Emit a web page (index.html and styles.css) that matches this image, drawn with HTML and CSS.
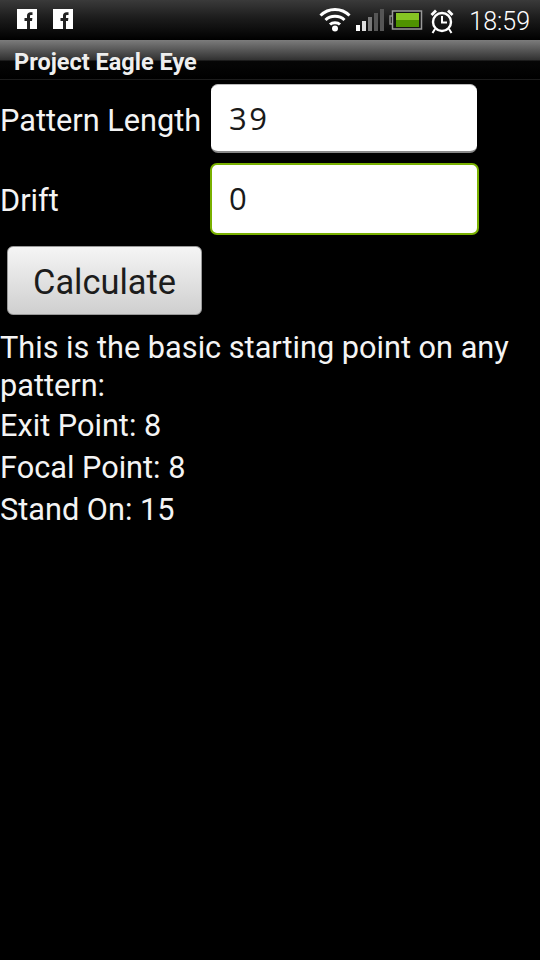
FILE: index.html
```html
<!DOCTYPE html>
<html lang="en">

<head>
    <meta charset="UTF-8">
    <title>Project Eagle Eye</title>
    <link rel="stylesheet" href="styles.css">
</head>

<body>
    <div class="statusbar">
        <div class="notify">
            <svg class="fb" viewBox="0 0 20 20"><rect width="20" height="20" fill="#fff"/><path d="M10 20V12H7.5V9H10V6.8C10 4.4 11.4 3.2 13.6 3.2H15.5V6H14.2C13.2 6 13 6.5 13 7.2V9H15.4L15 12H13V20Z" fill="#222"/></svg>
            <svg class="fb" viewBox="0 0 20 20"><rect width="20" height="20" fill="#fff"/><path d="M10 20V12H7.5V9H10V6.8C10 4.4 11.4 3.2 13.6 3.2H15.5V6H14.2C13.2 6 13 6.5 13 7.2V9H15.4L15 12H13V20Z" fill="#222"/></svg>
        </div>
        <div class="status">
            <svg class="wifi" width="32" height="26" viewBox="0 0 32 26" fill="none" stroke="#fff" stroke-width="3">
                <path d="M1.5 9.5C9.5 1.5 22.5 1.5 30.5 9.5"/>
                <path d="M6.5 14C11.5 9 20.5 9 25.5 14"/>
                <path d="M11 18.5C13.5 16 18.5 16 21 18.5"/>
                <circle cx="16" cy="22.5" r="3" fill="#fff" stroke="none"/>
            </svg>
            <svg class="signal" width="29" height="24" viewBox="0 0 29 24">
                <rect x="0" y="17" width="4" height="6" fill="#fff"/>
                <rect x="6" y="13" width="4" height="10" fill="#ddd"/>
                <rect x="12" y="9" width="4" height="14" fill="#777"/>
                <rect x="18" y="5" width="4" height="18" fill="#555"/>
                <rect x="24" y="1" width="4" height="22" fill="#555"/>
            </svg>
            <svg class="battery" width="35" height="20" viewBox="0 0 35 20">
                <path d="M4 6H2V14H4" fill="#111" stroke="#888" stroke-width="1.5"/>
                <rect x="4.5" y="1" width="29" height="18" fill="#111" stroke="#999" stroke-width="1.5"/>
                <rect x="8" y="3" width="23" height="14" fill="#4f9200"/>
                <rect x="8" y="3" width="23" height="7" fill="#86c423"/>
            </svg>
            <svg class="alarm" width="26" height="26" viewBox="0 0 26 26" fill="none" stroke="#fff">
                <circle cx="13" cy="14" r="9" stroke-width="2.4"/>
                <path d="M13 8V14.5H18" stroke-width="2"/>
                <path d="M1.5 6L6 1.5L8 3.5L3.5 8Z" fill="#fff" stroke="none"/>
                <path d="M24.5 6L20 1.5L18 3.5L22.5 8Z" fill="#fff" stroke="none"/>
                <path d="M6 21L3.5 25M20 21L22.5 25" stroke-width="2"/>
            </svg>
            <span class="clock">18:59</span>
        </div>
    </div>

    <div class="titlebar">Project Eagle Eye</div>

    <div class="content">
        <div class="row">
            <span class="label">Pattern Length</span>
            <div class="field">39</div>
        </div>
        <div class="row row-focus">
            <span class="label label-drift">Drift</span>
            <div class="field field-focus">0</div>
        </div>
        <div class="calc">Calculate</div>
        <div class="result">
            <p class="intro">This is the basic starting point on any pattern:</p>
            <p>Exit Point: 8</p>
            <p>Focal Point: 8</p>
            <p>Stand On: 15</p>
        </div>
    </div>
</body>

</html>
```

FILE: styles.css
```css
* {
    margin: 0;
    padding: 0;
    box-sizing: border-box;
}

body {
    width: 540px;
    height: 960px;
    overflow: hidden;
    background: #000;
    color: #f4f4f4;
    font-family: "Roboto", "Open Sans", sans-serif;
}

.statusbar {
    height: 40px;
    display: flex;
    justify-content: space-between;
    padding: 9px 10px 0 17px;
    background: linear-gradient(#3a3a3a, #1c1c1c 45%, #000);
}

.notify {
    display: flex;
    gap: 16px;
}

.fb {
    width: 20px;
    height: 20px;
}

.status {
    display: flex;
    align-items: flex-start;
    margin-top: -3px;
}

.wifi {
    margin: 0 5px 0 0;
}

.signal {
    margin: 2px 4px 0 0;
}

.battery {
    margin: 4px 6px 0 -1px;
}

.alarm {
    margin: 2px 14px 0 0;
}

.clock {
    font-family: "Roboto", sans-serif;
    font-size: 25px;
    line-height: 26px;
    font-weight: 300;
    color: #fff;
    margin-top: 3px;
}

.titlebar {
    height: 40px;
    padding-left: 14px;
    font-family: "Roboto", sans-serif;
    font-weight: 700;
    font-size: 23.5px;
    line-height: 44px;
    color: #eee;
    border-bottom: 1px solid #1c1c1c;
    background: linear-gradient(#7c7c7c, #333 50%, #060606 55%, #000);
}

.row {
    display: flex;
    align-items: center;
    height: 69px;
    margin-top: 4px;
}

.row-focus {
    height: 72px;
    margin-top: 10px;
}

.label {
    width: 211px;
    padding-top: 3px;
    font-size: 30.7px;
    white-space: nowrap;
}

.label-drift {
    width: 210px;
}

.field {
    width: 266px;
    height: 69px;
    padding-left: 18px;
    border-radius: 7px;
    background: #fff;
    border-top: 1px solid #bbb;
    border-bottom: 2px solid #888;
    color: #1a1a1a;
    font-family: "Open Sans", sans-serif;
    font-size: 31px;
    letter-spacing: 2.5px;
    line-height: 66px;
}

.field-focus {
    width: 269px;
    height: 72px;
    padding-left: 17px;
    border: 2px solid #79b000;
    line-height: 66px;
}

.calc {
    width: 195px;
    height: 69px;
    margin: 11px 0 0 7px;
    border-radius: 6px;
    background: linear-gradient(#f5f5f5, #cfcfcf);
    border: 1px solid #999;
    color: #1c1c1c;
    font-family: "Roboto", sans-serif;
    font-size: 34.4px;
    line-height: 70px;
    text-align: center;
}

.result {
    padding: 14px 20px 0 0;
    font-size: 30.7px;
    line-height: 38px;
}

.result p {
    height: 42px;
}

.result .intro {
    height: 78px;
}
```
